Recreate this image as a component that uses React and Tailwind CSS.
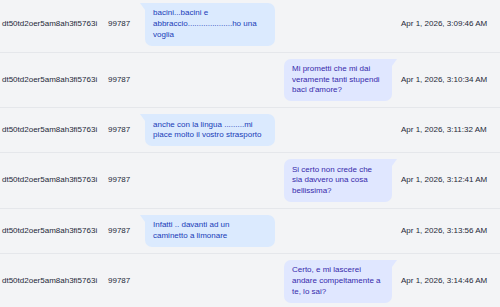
import React from 'react';

const messages = [
  { id: 1, text: 'bacini...bacini e abbraccio....................ho una voglia', out: false, time: 'Apr 1, 2026, 3:09:46 AM' },
  { id: 2, text: "Mi prometti che mi dai veramente tanti stupendi baci d'amore?", out: true, time: 'Apr 1, 2026, 3:10:34 AM' },
  { id: 3, text: 'anche con la lingua .........mi piace molto il vostro strasporto', out: false, time: 'Apr 1, 2026, 3:11:32 AM' },
  { id: 4, text: 'Si certo non crede che sia davvero una cosa bellissima?', out: true, time: 'Apr 1, 2026, 3:12:41 AM' },
  { id: 5, text: 'Infatti .. davanti ad un caminetto a limonare', out: false, time: 'Apr 1, 2026, 3:13:56 AM' },
  { id: 6, text: 'Certo, e mi lascerei andare compeltamente a te, lo sai?', out: true, time: 'Apr 1, 2026, 3:14:46 AM' },
];

function Bubble({ text, out }) {
  // small tail on the top corner facing the sender side
  if (out) {
    return (
      <div className="relative w-[108px] mr-[4px] bg-indigo-100 text-indigo-800 px-[8px] py-[5.33px] rounded-[7px] rounded-tr-none">
        {text}
        <svg className="absolute -right-[5px] top-0" width="5" height="7" viewBox="0 0 5 7">
          <path d="M0 0 L5 0 L0 7 Z" fill="#e0e7ff" />
        </svg>
      </div>
    );
  }
  return (
    <div className="relative w-[130px] ml-[5px] bg-blue-100 text-blue-800 pl-[8px] pr-[10px] py-[5.33px] rounded-[7px] rounded-tl-none">
      {text}
      <svg className="absolute -left-[5px] top-0" width="5" height="7" viewBox="0 0 5 7">
        <path d="M5 0 L0 0 L5 7 Z" fill="#dbeafe" />
      </svg>
    </div>
  );
}

export default function App() {
  return (
    <div className="w-[500px] h-[307px] overflow-hidden bg-gray-100 text-gray-800 text-[8px] leading-[10.67px] font-['Liberation_Sans',Arial,sans-serif]">
      <div className="-mt-[3px]">
        {messages.map((m) => (
          <div key={m.id} className="grid grid-cols-[108px_32px_256px_1fr] items-center py-[6px] border-b border-gray-200">
            <div className="pl-[2px] whitespace-nowrap">dt50td2oer5am8ah3fi5763i</div>
            <div>99787</div>
            <div className={`flex ${m.out ? 'justify-end' : 'justify-start'}`}>
              <Bubble text={m.text} out={m.out} />
            </div>
            <div className="pl-[5px] whitespace-nowrap">{m.time}</div>
          </div>
        ))}
      </div>
    </div>
  );
}
